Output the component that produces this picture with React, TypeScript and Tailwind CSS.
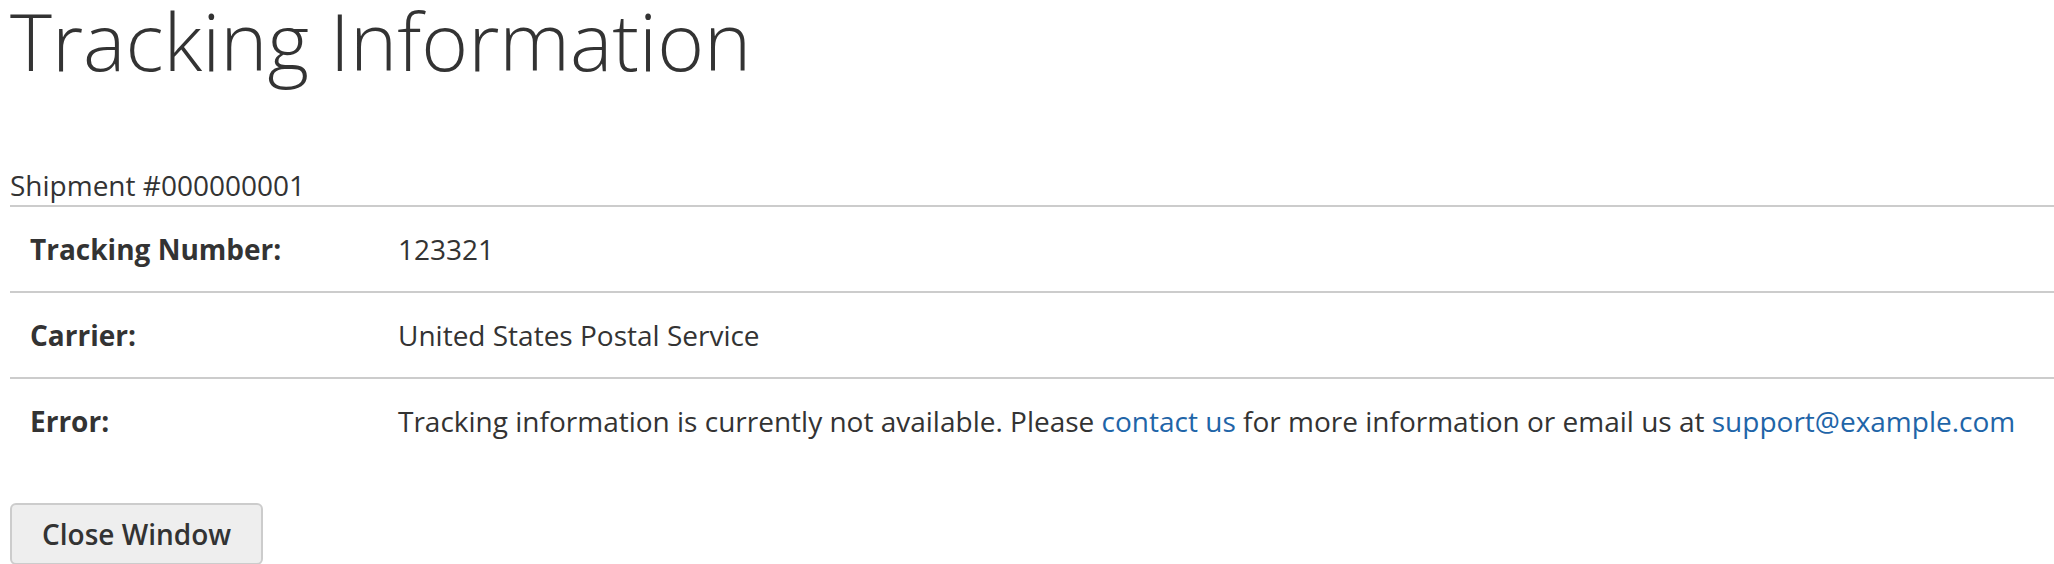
const rows = [
  { label: "Tracking Number:", value: "123321" },
  { label: "Carrier:", value: "United States Postal Service" },
];

export default function App() {
  return (
    <div className="min-h-[564px] bg-white pl-[10px] font-['Open_Sans',sans-serif] text-[28px] leading-[40px] text-[#333]">
      <h1 className="text-[80px] font-light leading-none text-[#333]">Tracking Information</h1>

      <table className="mt-[85px] w-full border-collapse text-left">
        <caption className="text-left">Shipment #000000001</caption>
        <tbody>
          {rows.map((row) => (
            <tr key={row.label} className="border-t-2 border-[#cccccc]">
              <th className="w-[368px] px-[20px] py-[22px] align-top font-bold">{row.label}</th>
              <td className="px-[20px] py-[22px] align-top">{row.value}</td>
            </tr>
          ))}
          <tr className="border-t-2 border-[#cccccc]">
            <th className="w-[368px] px-[20px] py-[22px] align-top font-bold">Error:</th>
            <td className="px-[20px] py-[22px] align-top">
              Tracking information is currently not available. Please{" "}
              <a href="#" className="text-[#1f65a8]">
                contact us
              </a>{" "}
              for more information or email us at{" "}
              <a href="#" className="text-[#1f65a8]">
                support@example.com
              </a>
            </td>
          </tr>
        </tbody>
      </table>

      <div className="mt-[40px]">
        <button
          type="button"
          className="rounded-[6px] border-2 border-[#cccccc] bg-[#eeeeee] px-[30px] py-[13px] text-[28px] font-semibold leading-[32px] text-[#333]"
        >
          Close Window
        </button>
      </div>
    </div>
  );
}
